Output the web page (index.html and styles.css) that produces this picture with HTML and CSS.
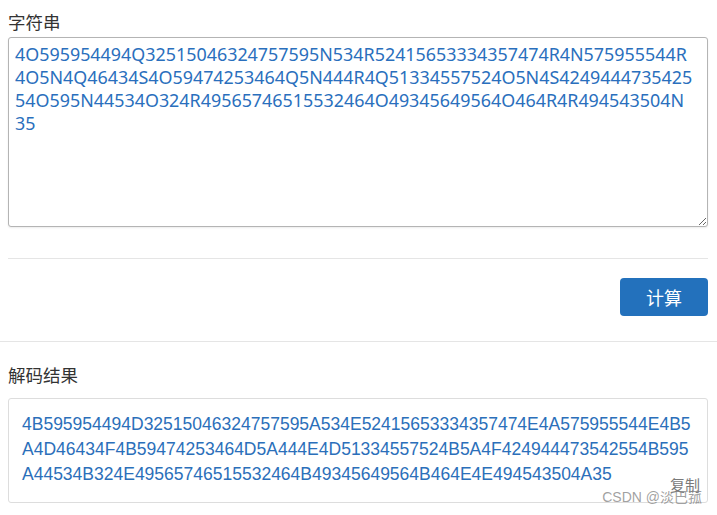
FILE: index.html
```html
<!DOCTYPE html>
<html lang="zh-CN">
<head>
<meta charset="utf-8">
<title>解码</title>
<link rel="stylesheet" href="styles.css">
</head>
<body>
<div class="section top">
  <label class="field-label" for="src">字符串</label>
  <textarea id="src" class="input">4O595954494Q32515046324757595N534R52415653334357474R4N575955544R
4O5N4Q46434S4O59474253464Q5N444R4Q51334557524O5N4S4249444735425
54O595N44534O324R49565746515532464O49345649564O464R4R494543504N
35</textarea>
  <div class="divider"></div>
  <div class="actions">
    <button class="btn-primary" type="button">计算</button>
  </div>
</div>
<div class="rule"></div>
<div class="section bottom">
  <div class="field-label">解码结果</div>
  <div class="result">
    <div class="result-text">4B595954494D32515046324757595A534E52415653334357474E4A575955544E4B5<br>A4D46434F4B59474253464D5A444E4D51334557524B5A4F424944473542554B595<br>A44534B324E49565746515532464B49345649564B464E4E494543504A35</div>
    <span class="copy">复制</span>
  </div>
</div>
<div class="watermark">CSDN @淡巴菰</div>
</body>
</html>
```

FILE: styles.css
```css
html, body {
  margin: 0;
  padding: 0;
  background: #ffffff;
}

body {
  font-family: "Noto Sans CJK SC", "Noto Sans", sans-serif;
  color: #333333;
  position: relative;
  min-height: 515px;
}

.section {
  padding: 0 9px 0 8px;
}

.field-label {
  display: block;
  font-size: 17.5px;
  line-height: 25px;
  height: 25px;
  color: #333333;
}

.top .field-label {
  margin-top: 9px;
  margin-bottom: 3px;
}

.input {
  display: block;
  box-sizing: border-box;
  width: 100%;
  height: 190px;
  margin: 0;
  padding: 5px 3px 0 6px;
  border: 1px solid #b4b4b4;
  border-radius: 3px;
  box-shadow: 0 1px 2px rgba(0, 0, 0, 0.08);
  font-family: "Noto Sans", "Noto Sans CJK SC", sans-serif;
  font-size: 17.9px;
  line-height: 23px;
  color: #2a6fbd;
  background: #ffffff;
  outline: none;
}

.divider {
  margin-top: 31px;
  height: 1px;
  background: #e5e5e5;
}

.actions {
  display: flex;
  justify-content: flex-end;
  padding: 19px 0 25px;
}

.btn-primary {
  width: 88px;
  height: 38px;
  border: none;
  border-radius: 4px;
  background: #2371bc;
  color: #ffffff;
  font-family: "Noto Sans CJK SC", sans-serif;
  font-size: 18px;
  line-height: 38px;
  padding: 0;
  cursor: pointer;
}

.rule {
  height: 1px;
  background: #e5e5e5;
}

.bottom .field-label {
  margin-top: 20px;
  margin-bottom: 11px;
}

.result {
  position: relative;
  box-sizing: border-box;
  border: 1px solid #dddddd;
  border-radius: 3px;
  padding: 13px 13px 15px 13px;
}

.result-text {
  font-family: "Liberation Sans", Arial, sans-serif;
  font-size: 17.5px;
  line-height: 25px;
  color: #2b6fba;
  white-space: nowrap;
}

.copy {
  position: absolute;
  right: 7px;
  bottom: 7px;
  font-family: "Noto Sans CJK SC", sans-serif;
  font-size: 15px;
  line-height: 20px;
  color: #7a7a7a;
}

.watermark {
  position: absolute;
  right: 15px;
  top: 488px;
  font-family: "Liberation Sans", "Noto Sans CJK SC", sans-serif;
  font-size: 14px;
  line-height: 18px;
  color: rgba(130, 130, 130, 0.75);
}
```
